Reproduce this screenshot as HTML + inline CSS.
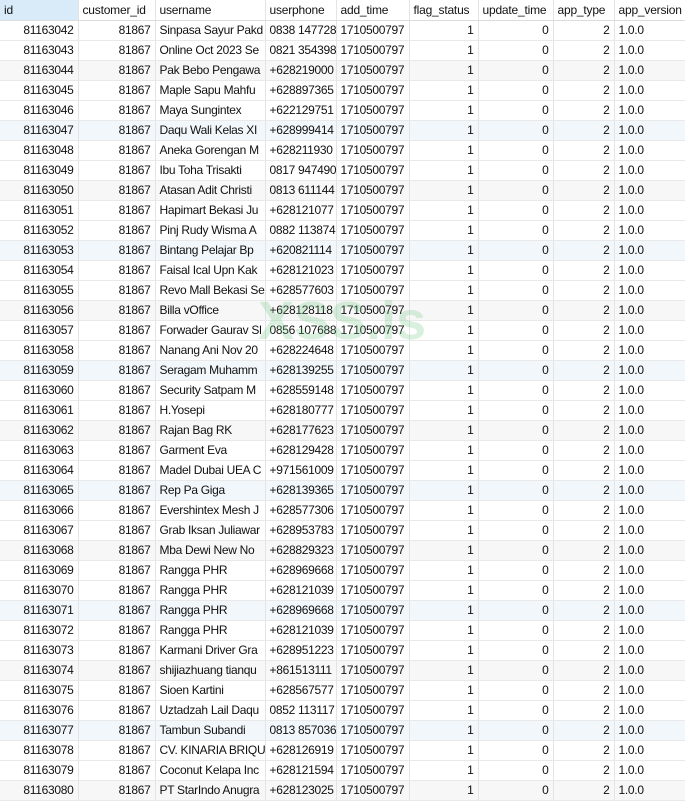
<!DOCTYPE html>
<html><head><meta charset="utf-8"><style>
body{margin:0;width:685px;height:802px;overflow:hidden;background:#fff;font-family:"Liberation Sans",sans-serif;font-size:12px;color:#111;position:relative}
table{border-collapse:collapse;table-layout:fixed;width:686px}
td,th{height:19px;padding:0 4px;border-right:1px solid #e4e4e4;border-bottom:1px solid #e9e9e9;white-space:nowrap;overflow:hidden;text-overflow:clip;font-weight:normal;line-height:19px;letter-spacing:-0.3px}
th{height:20px;line-height:20px;text-align:left;background:#fff;border-right:1px solid #e4e4e4;border-bottom:1px solid #dcdcdc;letter-spacing:-0.2px}
th.s{background:#d9ebf9}
.r{text-align:right}
tr.g td{background:#f7f7f7}
tr.b td{background:#f2f7fc}
.wm{position:absolute;left:258px;top:290px;font:bold 54px "Liberation Sans",sans-serif;color:rgba(120,200,140,0.28);pointer-events:none}
</style></head><body>
<table>
<colgroup><col style="width:78px"><col style="width:77px"><col style="width:110px"><col style="width:71px"><col style="width:73px"><col style="width:69px"><col style="width:75px"><col style="width:61px"><col style="width:72px"></colgroup>
<thead><tr><th class="s">id</th><th>customer_id</th><th>username</th><th>userphone</th><th>add_time</th><th>flag_status</th><th>update_time</th><th>app_type</th><th>app_version</th></tr></thead>
<tbody id="tb"></tbody></table>
<div class="wm">XSS.is</div>
<script>
var u=[["Sinpasa Sayur Pakd","0838 147728"],["Online Oct 2023 Se","0821 354398"],["Pak Bebo Pengawa","+628219000"],["Maple Sapu Mahfu","+628897365"],["Maya Sungintex","+622129751"],["Daqu Wali Kelas XI","+628999414"],["Aneka Gorengan M","+628211930"],["Ibu Toha Trisakti","0817 947490"],["Atasan Adit  Christi","0813 611144"],["Hapimart Bekasi Ju","+628121077"],["Pinj Rudy Wisma A","0882 113874"],["Bintang Pelajar Bp","+620821114"],["Faisal Ical Upn Kak","+628121023"],["Revo Mall Bekasi Se","+628577603"],["Billa vOffice","+628128118"],["Forwader Gaurav Sl","0856 107688"],["Nanang Ani Nov 20","+628224648"],["Seragam Muhamm","+628139255"],["Security Satpam M","+628559148"],["H.Yosepi","+628180777"],["Rajan Bag RK","+628177623"],["Garment  Eva","+628129428"],["Madel Dubai UEA C","+971561009"],["Rep Pa Giga","+628139365"],["Evershintex Mesh J","+628577306"],["Grab Iksan Juliawar","+628953783"],["Mba Dewi New No","+628829323"],["Rangga PHR","+628969668"],["Rangga PHR","+628121039"],["Rangga PHR","+628969668"],["Rangga PHR","+628121039"],["Karmani Driver Gra","+628951223"],["shijiazhuang tianqu","+861513111"],["Sioen Kartini","+628567577"],["Uztadzah Lail Daqu","0852 113117"],["Tambun Subandi","0813 857036"],["CV. KINARIA BRIQU","+628126919"],["Coconut Kelapa Inc","+628121594"],["PT StarIndo Anugra","+628123025"]];
var h="";for(var i=0;i<u.length;i++){var c=i%6==2?"g":(i%6==5?"b":"");h+='<tr class="'+c+'"><td class="r">'+(81163042+i)+'</td><td class="r">81867</td><td>'+u[i][0]+'</td><td>'+u[i][1]+'</td><td>1710500797</td><td class="r">1</td><td class="r">0</td><td class="r">2</td><td>1.0.0</td></tr>';}
document.getElementById("tb").innerHTML=h;
</script>
</body></html>
